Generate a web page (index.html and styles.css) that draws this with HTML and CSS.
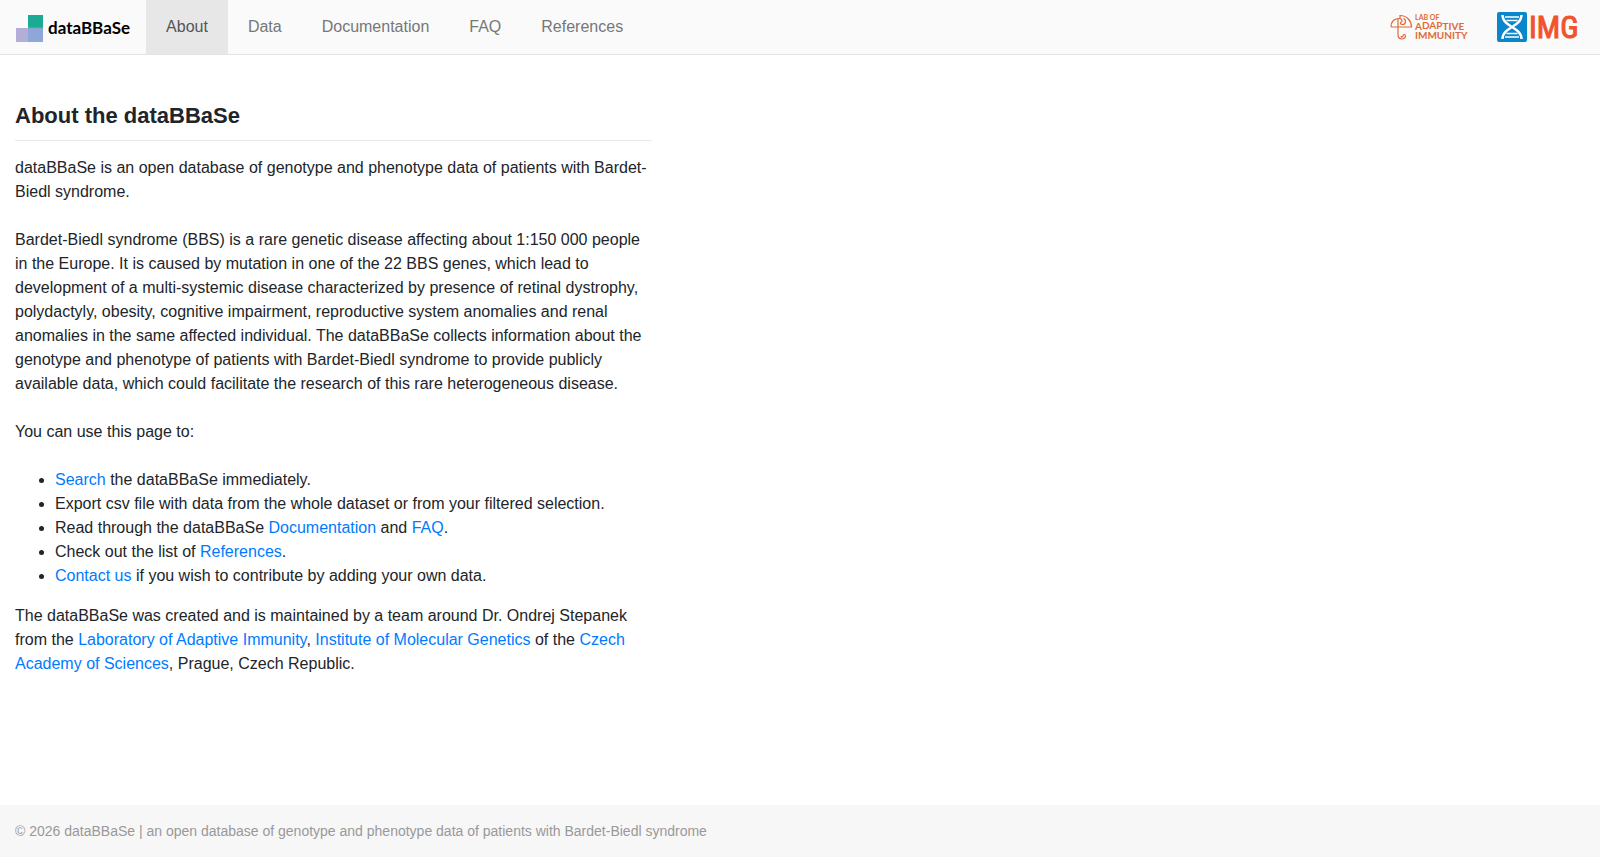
FILE: index.html
```html
<!DOCTYPE html>
<html lang="en">
<head>
<meta charset="utf-8">
<meta name="viewport" content="width=device-width, initial-scale=1">
<title>dataBBaSe</title>
<link rel="stylesheet" href="styles.css">
</head>
<body>
<header class="navbar">
  <a class="brand" href="#">
    <svg class="brand-mark" viewBox="0 0 28 28" aria-hidden="true">
      <rect x="12" y="0" width="15" height="14" fill="#1aab94"/>
      <rect x="0" y="13" width="12" height="14" fill="#b3aed8"/>
      <rect x="12" y="13" width="15" height="14" fill="#8ea6d8"/>
      <path d="M12 13h15" stroke="#7ba5b4"/>
    </svg>
    <span class="brand-name">dataBBaSe</span>
  </a>
  <nav class="menu">
    <a class="menu-link active" href="#">About</a>
    <a class="menu-link" href="#">Data</a>
    <a class="menu-link" href="#">Documentation</a>
    <a class="menu-link" href="#">FAQ</a>
    <a class="menu-link" href="#">References</a>
  </nav>
  <div class="partners">
    <a href="#" aria-label="Lab of Adaptive Immunity">
      <svg class="lab-logo" viewBox="0 0 80 30" fill="#df6a35">
        <g fill="none" stroke="#df6a35" stroke-width="1.2">
          <path d="M8 15V22.500C8 28.500 15.500 28 15.500 24C15.500 22 13 22 13 24C13 25.500 11 25.500 11 24M1 15C1 9 4.500 6.500 9 6.500C11 6.500 12 7.500 12 9M8 15V6.500M1 15H21.500C21.500 9 17 3.500 10 3.500V6.500M12.500 9.500C10 9.500 9.500 12.500 12.500 12.500C16 12.500 16.500 8 13.500 6.500"/>
        </g>
        <text class="lab-small" x="25" y="8">LAB OF</text>
        <text class="lab-large" x="25" y="18">A<tspan y="17">DAP</tspan><tspan y="18">TIVE</tspan></text>
        <text class="lab-large" x="25" y="27">IMMUNITY</text>
      </svg>
    </a>
    <a href="#" aria-label="IMG">
      <svg class="img-logo" viewBox="0 0 82 30">
        <rect width="30" height="30" rx="2" fill="#0a86cb"/>
        <g fill="none" stroke="#fff" stroke-width="2.4">
          <path d="M5.500 3C5.500 15 24.500 15 24.500 27M24.500 3C24.500 15 5.500 15 5.500 27"/>
          <path d="M8 5H22M9.500 8.500H20.500M9.500 21.500H20.500M8 25H22" stroke-width="1.500"/>
        </g>
        <text class="img-text" x="32" y="26">IMG</text>
      </svg>
    </a>
  </div>
</header>
<main class="content">
  <h1 class="title">About the dataBBaSe</h1>
  <p class="intro">dataBBaSe is an open database of genotype and phenotype data of patients with Bardet-Biedl syndrome.</p>
  <p class="intro">Bardet-Biedl syndrome (BBS) is a rare genetic disease affecting about 1:150 000 people in the Europe. It is caused by mutation in one of the 22 BBS genes, which lead to development of a multi-systemic disease characterized by presence of retinal dystrophy, polydactyly, obesity, cognitive impairment, reproductive system anomalies and renal anomalies in the same affected individual. The dataBBaSe collects information about the genotype and phenotype of patients with Bardet-Biedl syndrome to provide publicly available data, which could facilitate the research of this rare heterogeneous disease.</p>
  <p class="intro">You can use this page to:</p>
  <ul class="actions">
    <li><a href="#">Search</a> the dataBBaSe immediately.</li>
    <li>Export csv file with data from the whole dataset or from your filtered selection.</li>
    <li>Read through the dataBBaSe <a href="#">Documentation</a> and <a href="#">FAQ</a>.</li>
    <li>Check out the list of <a href="#">References</a>.</li>
    <li><a href="#">Contact us</a> if you wish to contribute by adding your own data.</li>
  </ul>
  <p class="credits">The dataBBaSe was created and is maintained by a team around Dr. Ondrej Stepanek from the <a href="#">Laboratory of Adaptive Immunity</a>, <a href="#">Institute of Molecular Genetics</a> of the <a href="#">Czech Academy of Sciences</a>, Prague, Czech Republic.</p>
</main>
<footer class="footer">© 2026 dataBBaSe | an open database of genotype and phenotype data of patients with Bardet-Biedl syndrome</footer>
</body>
</html>
```
FILE: styles.css
```css
* { box-sizing: border-box; }

body {
  margin: 0;
  min-height: 100vh;
  display: flex;
  flex-direction: column;
  font: 16px/24px "Liberation Sans", Arial, sans-serif;
  color: #212529;
  background: #fff;
}

a { color: #007bff; text-decoration: none; }

.navbar {
  display: flex;
  align-items: stretch;
  background: #fafafa;
  border-bottom: 1px solid #e2e2e2;
}

.brand {
  display: flex;
  align-items: center;
  gap: 4px;
  padding: 4px 16px 0;
  color: #000;
}

.brand-mark { width: 28px; height: 28px; }

.brand-name {
  padding-bottom: 2px;
  font: 700 17px/20px Lato, sans-serif;
}

.menu { display: flex; }

.menu-link {
  padding: 15px 20px;
  color: #777;
}

.menu-link.active {
  color: #555;
  background: #e7e7e7;
}

.partners {
  display: flex;
  align-items: center;
  gap: 27px;
  margin-left: auto;
  padding-right: 21px;
}

.partners a { display: flex; }

.lab-logo { width: 80px; height: 30px; }
.lab-small { font: 700 7px Lato, sans-serif; }
.lab-large { font: 700 10px Lato, sans-serif; }

.img-logo {
  width: 82px;
  height: 30px;
  overflow: visible;
}

.img-text {
  font: 400 31px "Liberation Sans Narrow", "Roboto Condensed", sans-serif;
  fill: #f0532d;
  stroke: #f0532d;
  stroke-width: 1px;
}

.content {
  width: calc(100% * 5 / 12);
  flex: 1;
  padding: 45px 15px 0;
}

.title {
  margin: 0 0 15px;
  padding-bottom: 8px;
  border-bottom: 1px solid #e7e7e7;
  font-size: 22px;
  line-height: 32px;
}

.intro { margin: 0 0 24px; }
.actions { margin: 0 0 16px; padding-left: 40px; }
.credits { margin: 0 0 24px; }

.footer {
  padding: 14px 15px;
  background: #f7f7f7;
  color: #999;
  font-size: 14px;
}
```
